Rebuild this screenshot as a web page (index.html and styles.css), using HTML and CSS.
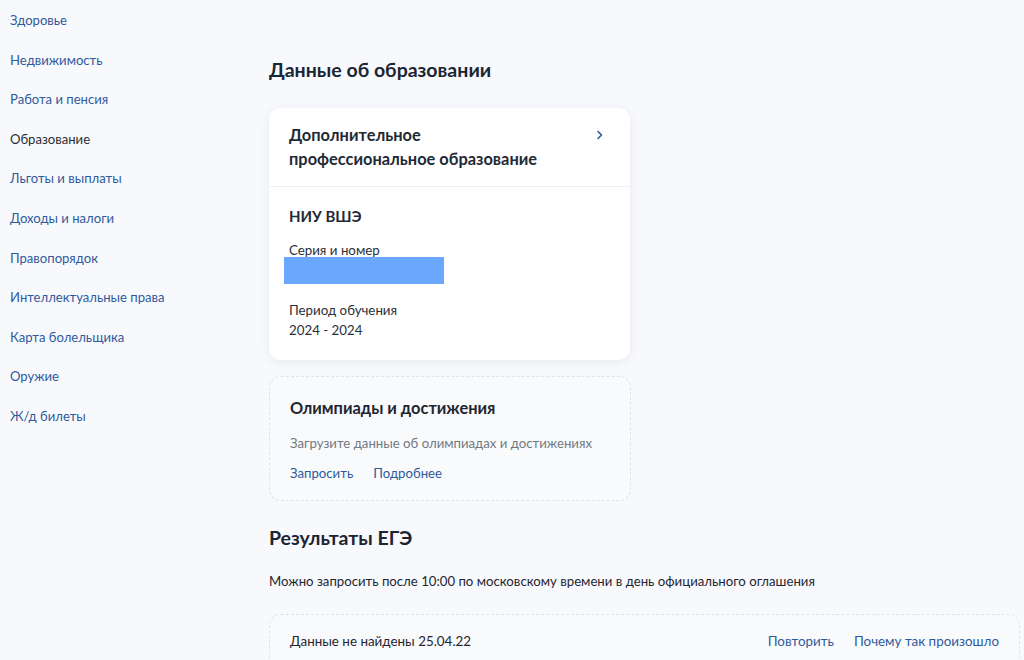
FILE: index.html
```html
<!DOCTYPE html>
<html lang="ru">
  <head>
    <meta charset="utf-8">
    <title>Образование</title>
    <link rel="stylesheet" href="styles.css">
  </head>
  <body>
    <div class="page">
      <nav class="side-menu">
        <a class="side-link" href="#">Здоровье</a>
        <a class="side-link" href="#">Недвижимость</a>
        <a class="side-link" href="#">Работа и пенсия</a>
        <a class="side-link active" href="#">Образование</a>
        <a class="side-link" href="#">Льготы и выплаты</a>
        <a class="side-link" href="#">Доходы и налоги</a>
        <a class="side-link" href="#">Правопорядок</a>
        <a class="side-link" href="#">Интеллектуальные права</a>
        <a class="side-link" href="#">Карта болельщика</a>
        <a class="side-link" href="#">Оружие</a>
        <a class="side-link" href="#">Ж/д билеты</a>
      </nav>

      <main class="content">
        <h2 class="section-title">Данные об образовании</h2>

        <div class="card doc-card">
          <div class="doc-head">
            <div class="doc-type">Дополнительное профессиональное образование</div>
            <svg class="chevron" width="8" height="10" viewBox="0 0 8 10"><path d="M2 1.5 L5.5 5 L2 8.5" fill="none" stroke="#2f5a9c" stroke-width="1.6" stroke-linecap="round" stroke-linejoin="round"/></svg>
          </div>
          <div class="doc-body">
            <div class="doc-org">НИУ ВШЭ</div>
            <div class="field">
              <div class="field-label">Серия и номер</div>
              <div class="hidden-value"></div>
            </div>
            <div class="field">
              <div class="field-label">Период обучения</div>
              <div class="field-value">2024 - 2024</div>
            </div>
          </div>
        </div>

        <div class="card empty-card narrow">
          <div class="empty-title">Олимпиады и достижения</div>
          <div class="empty-text">Загрузите данные об олимпиадах и достижениях</div>
          <div class="links">
            <a href="#">Запросить</a>
            <a href="#">Подробнее</a>
          </div>
        </div>

        <h2 class="section-title exam-title">Результаты ЕГЭ</h2>
        <p class="note">Можно запросить после 10:00 по московскому времени в день официального оглашения</p>

        <div class="card empty-card wide">
          <div class="row">
            <span>Данные не найдены 25.04.22</span>
            <div class="links">
              <a href="#">Повторить</a>
              <a href="#">Почему так произошло</a>
            </div>
          </div>
        </div>
      </main>
    </div>
  </body>
</html>
```

FILE: styles.css
```css
html, body { margin: 0; padding: 0; }
body {
  background: #f8f9fc;
  font-family: Lato, "Noto Sans", sans-serif;
  color: #1f2631;
  font-size: 13px;
}
a { text-decoration: none; color: #2f5a9c; }

.page { display: flex; align-items: flex-start; }

.side-menu {
  width: 269px;
  flex: none;
  display: flex;
  flex-direction: column;
  padding: 12px 0 0 10px;
  box-sizing: border-box;
  gap: 22px;
}
.side-link { font-size: 13.1px; line-height: 17.6px; }
.side-link.active { color: #2a2f38; }

.content { width: 751px; padding-top: 56px; }

.section-title {
  margin: 0;
  font-size: 19.5px;
  font-weight: 700;
  line-height: 28px;
  color: #1b2533;
}

.card {
  background: #fff;
  border-radius: 12px;
  box-sizing: border-box;
}
.doc-card {
  width: 361px;
  margin-top: 24px;
  box-shadow: 0 2px 10px rgba(40, 60, 110, 0.08);
}
.doc-head {
  display: flex;
  justify-content: space-between;
  padding: 15px 20px 16px 20px;
  border-bottom: 1px solid #eef0f4;
}
.doc-type {
  font-size: 16.4px;
  font-weight: 700;
  line-height: 23.5px;
  width: 275px;
  color: #222a35;
}
.chevron { margin-top: 7px; margin-right: 6px; }

.doc-body { padding: 19px 20px 20px 20px; }
.doc-org { font-size: 15px; font-weight: 700; line-height: 20px; color: #222a35; }
.field { margin-top: 14px; }
.field + .field { margin-top: 16px; }
.field-label, .field-value { font-size: 13.3px; line-height: 20px; color: #2a2f38; }
.hidden-value {
  width: 160px;
  height: 27px;
  margin-left: -5px;
  margin-top: -3px;
  background: #6ba8fd;
}

.empty-card {
  border: 1px dashed #dfe3ea;
  background: #f9fafc;
}
.narrow {
  width: 362px;
  margin-top: 16px;
  padding: 20px 20px 18px 20px;
}
.empty-title { font-size: 16.4px; font-weight: 700; line-height: 22px; color: #1f2631; }
.empty-text { margin-top: 15px; font-size: 13.2px; color: #727982; line-height: 18px; }
.links { display: flex; gap: 20px; font-size: 13.2px; line-height: 18px; }
.narrow .links { margin-top: 12px; }

.exam-title { margin-top: 23px; }
.note { margin: 20px 0 0 0; font-size: 13.2px; line-height: 18px; color: #1f2631; }

.wide {
  width: 751px;
  margin-top: 24px;
  padding: 16px 20px 40px 20px;
}
.row { display: flex; justify-content: space-between; align-items: center; font-size: 13.4px; line-height: 20px; }
.row .links { font-size: 13.4px; }
```
